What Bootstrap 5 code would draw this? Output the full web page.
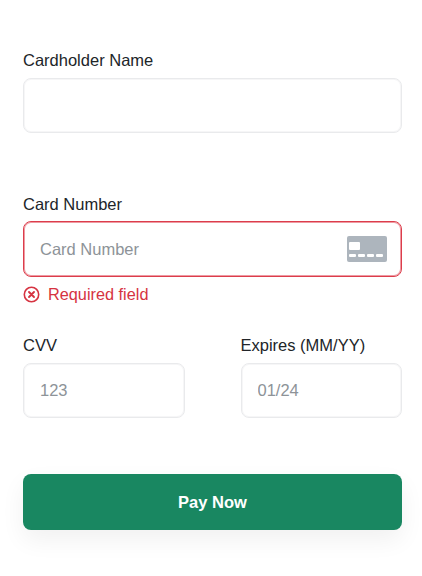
<!DOCTYPE html>
<html lang="en">
<head>
<meta charset="utf-8">
<title>Payment</title>
<link rel="stylesheet" href="https://cdn.jsdelivr.net/npm/bootstrap@5.3.0/dist/css/bootstrap.min.css">
<style>
html,body{background:#fff;height:100%;overflow:hidden}
body{font-family:"Liberation Sans",Arial,sans-serif;color:#212529}
.pay-form{padding:50px 20px 0 23px}
.pay-label{font-size:16.5px;line-height:20px;margin-bottom:8px;display:block;color:#212529}
.pay-input.form-control{height:56px;border:1px solid #e9eaec;border-radius:8px;font-size:16.5px;padding:0 16px;color:#212529;box-shadow:inset 0 0 0 1px #f6f6f7}
.pay-input.form-control.pay-short{height:55px}
.pay-input.form-control::placeholder{color:#8d9398;opacity:1}
.pay-input.is-bad.form-control{border-color:#dc3d4b;box-shadow:inset 0 0 0 1px #ee9aa2;background-image:none;padding-right:60px}
.pay-field-wrap{position:relative}
.pay-card-icon{position:absolute;top:15px;right:15px;width:40px;height:26px;display:block}
.pay-name{margin-bottom:61px}
.pay-number .pay-label{margin-bottom:7px}
.pay-error{color:#d63341;font-size:16.3px;line-height:20px;margin-top:7px;gap:8px}
.pay-number{margin-bottom:31px}
.pay-row{column-gap:56px;margin-bottom:56px}
.pay-cell{flex:1 1 0;min-width:0}
.pay-btn.btn{height:56px;width:100%;background:#198761;border:0;border-radius:8px;color:#fff;font-weight:700;font-size:16.5px;box-shadow:0 10px 24px rgba(0,0,0,.06)}
</style>
</head>
<body>
<form class="pay-form" novalidate>
  <div class="pay-name">
    <label class="pay-label" for="holder">Cardholder Name</label>
    <input class="form-control pay-input pay-short" id="holder" type="text">
  </div>
  <div class="pay-number">
    <label class="pay-label" for="number">Card Number</label>
    <div class="pay-field-wrap">
      <input class="form-control pay-input is-bad" id="number" type="text" placeholder="Card Number">
      <svg class="pay-card-icon" viewBox="0 0 40 26" aria-hidden="true">
        <rect width="40" height="26" rx="2" fill="#adb5bd"/>
        <rect x="2" y="6" width="11" height="8" rx="1" fill="#fff"/>
        <rect x="2" y="18" width="7" height="3" rx="1" fill="#fff"/>
        <rect x="11" y="18" width="7" height="3" rx="1" fill="#fff"/>
        <rect x="20" y="18" width="7" height="3" rx="1" fill="#fff"/>
        <rect x="29" y="18" width="7" height="3" rx="1" fill="#fff"/>
      </svg>
    </div>
    <div class="pay-error d-flex align-items-center">
      <svg width="17" height="17" viewBox="0 0 17 17" aria-hidden="true" fill="none" stroke="#d63341">
        <circle cx="8.5" cy="8.5" r="7.2" stroke-width="1.6"/>
        <path d="M6 6l5 5M11 6l-5 5" stroke-width="1.9" stroke-linecap="round"/>
      </svg>
      <span>Required field</span>
    </div>
  </div>
  <div class="d-flex pay-row">
    <div class="pay-cell">
      <label class="pay-label" for="cvv">CVV</label>
      <input class="form-control pay-input pay-short" id="cvv" type="text" placeholder="123">
    </div>
    <div class="pay-cell">
      <label class="pay-label" for="exp">Expires (MM/YY)</label>
      <input class="form-control pay-input pay-short" id="exp" type="text" placeholder="01/24">
    </div>
  </div>
  <button class="btn pay-btn" type="button">Pay Now</button>
</form>
<script src="https://cdn.jsdelivr.net/npm/bootstrap@5.3.0/dist/js/bootstrap.bundle.min.js"></script>
</body>
</html>
